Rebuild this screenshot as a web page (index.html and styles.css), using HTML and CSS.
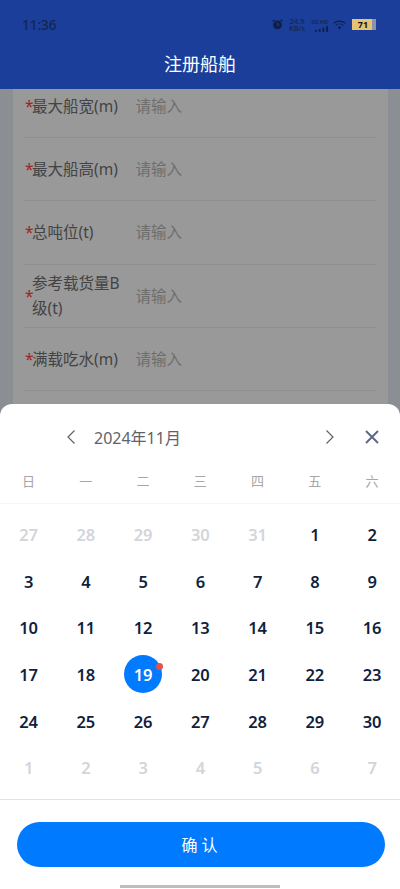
FILE: index.html
```html
<!DOCTYPE html>
<html lang="zh-CN">
<head>
<meta charset="utf-8">
<title>注册船舶</title>
<link rel="stylesheet" href="styles.css">
</head>
<body>
<div class="page">
  <header class="header">
    <div class="status">
      <span class="time">11:36</span>
      <div class="status-icons">
        <svg class="alarm" viewBox="0 0 12 12" width="11" height="11"><circle cx="6" cy="6.500" r="4.800" fill="#0f1f4a"/><path d="M6 3.800v3h2" stroke="#1a3e9a" stroke-width="1" fill="none"/><path d="M.6 2.600 2.600.8M11.400 2.600 9.400.8" stroke="#0f1f4a" stroke-width="1.400"/></svg>
        <span class="speed"><span>24.9</span><span>KB/s</span></span>
        <span class="net">
          <span class="net-label">5G HD</span>
          <svg viewBox="0 0 14 6" width="13" height="6"><g fill="#0f1f4a"><rect x="0" y="4" width="2" height="2"/><rect x="4" y="3" width="2" height="3"/><rect x="8" y="1.500" width="2" height="4.500"/><rect x="12" y="0" width="2" height="6"/></g></svg>
        </span>
        <svg class="wifi" viewBox="0 0 14 10" width="13" height="10"><g fill="none" stroke="#0f1f4a" stroke-width="1.300"><path d="M.7 3.200C4.300-.100 9.700-.100 13.300 3.200"/><path d="M2.900 5.400C5.200 3.400 8.800 3.400 11.100 5.400"/></g><path d="M5 7.400C6.200 6.500 7.800 6.500 9 7.400L7 9.800Z" fill="#0f1f4a"/></svg>
        <span class="battery"><span class="battery-level">71</span></span>
      </div>
    </div>
    <h1 class="title">注册船舶</h1>
  </header>
  <main class="content">
    <div class="card">
      <div class="row row-clipped"><span class="star">*</span><span class="label">最大船宽(m)</span><span class="hint">请输入</span></div>
      <div class="row"><span class="star">*</span><span class="label">最大船高(m)</span><span class="hint">请输入</span></div>
      <div class="row"><span class="star">*</span><span class="label">总吨位(t)</span><span class="hint">请输入</span></div>
      <div class="row"><span class="star">*</span><span class="label">参考载货量B级(t)</span><span class="hint">请输入</span></div>
      <div class="row"><span class="star">*</span><span class="label">满载吃水(m)</span><span class="hint">请输入</span></div>
    </div>
  </main>
  <div class="mask"></div>
  <section class="sheet">
    <div class="month-bar">
      <svg class="prev" viewBox="0 0 10 16" width="10" height="16"><path d="M8.500 1.500 2 8l6.500 6.500" fill="none" stroke="#5f6368" stroke-width="1.200"/></svg>
      <span class="month">2024年11月</span>
      <svg class="next" viewBox="0 0 10 16" width="10" height="16"><path d="M1.500 1.500 8 8l-6.500 6.500" fill="none" stroke="#5f6368" stroke-width="1.200"/></svg>
      <svg class="close" viewBox="0 0 14 14" width="14" height="14"><path d="M1 1l12 12M13 1 1 13" fill="none" stroke="#5e6a85" stroke-width="2"/></svg>
    </div>
    <div class="weekdays"><span>日</span><span>一</span><span>二</span><span>三</span><span>四</span><span>五</span><span>六</span></div>
    <div class="days">
      <span class="day off">27</span><span class="day off">28</span><span class="day off">29</span><span class="day off">30</span><span class="day off">31</span><span class="day">1</span><span class="day">2</span>
      <span class="day">3</span><span class="day">4</span><span class="day">5</span><span class="day">6</span><span class="day">7</span><span class="day">8</span><span class="day">9</span>
      <span class="day">10</span><span class="day">11</span><span class="day">12</span><span class="day">13</span><span class="day">14</span><span class="day">15</span><span class="day">16</span>
      <span class="day">17</span><span class="day">18</span><span class="day selected"><span class="circle">19<i class="dot"></i></span></span><span class="day">20</span><span class="day">21</span><span class="day">22</span><span class="day">23</span>
      <span class="day">24</span><span class="day">25</span><span class="day">26</span><span class="day">27</span><span class="day">28</span><span class="day">29</span><span class="day">30</span>
      <span class="day off">1</span><span class="day off">2</span><span class="day off">3</span><span class="day off">4</span><span class="day off">5</span><span class="day off">6</span><span class="day off">7</span>
    </div>
    <div class="footer">
      <button class="confirm">确 认</button>
      <div class="home-bar"></div>
    </div>
  </section>
</div>
</body>
</html>
```
FILE: styles.css
```css
* { box-sizing: border-box; }
html, body { margin: 0; padding: 0; }
body {
  width: 400px;
  height: 889px;
  overflow: hidden;
  font-family: "Noto Sans", "Noto Sans CJK SC", sans-serif;
}
.page {
  position: relative;
  width: 400px;
  height: 889px;
  overflow: hidden;
  background: #e8eff5;
  display: flex;
  flex-direction: column;
}
.header {
  position: relative;
  z-index: 1;
  height: 88.500px;
  background: #1a3e9a;
  display: flex;
  flex-direction: column;
  flex-shrink: 0;
}
.status {
  height: 49px;
  padding: 0 24px 0 22px;
  display: flex;
  align-items: center;
  justify-content: space-between;
}
.time { font-size: 13.500px; color: #14264f; font-weight: 500; }
.status-icons { display: flex; align-items: center; }
.alarm { margin-right: 6px; }
.speed { width: 16px; display: flex; flex-direction: column; align-items: center; font-size: 7.500px; line-height: 7px; color: #14264f; white-space: nowrap; margin-right: 5px; font-weight: 500; }
.net { width: 18px; display: flex; flex-direction: column; align-items: flex-end; margin-right: 5px; }
.net-label { font-size: 5.500px; line-height: 8px; color: #14264f; font-weight: 600; white-space: nowrap; }
.wifi { margin-right: 6px; }
.battery { width: 24px; height: 11px; background: linear-gradient(90deg, #e6c274 0 84%, #8c93a8 84%); display: flex; align-items: center; justify-content: center; padding-right: 2px; }
.battery-level { font-size: 9px; font-weight: 700; color: #111; line-height: 11px; }
.title {
  margin: 0;
  font-size: 18px;
  font-weight: 400;
  line-height: 30px;
  color: #fff;
  text-align: center;
}
.content { flex: 1; padding: 0 12px 0 13px; }
.card { background: #fff; padding: 0 11px; height: 100%; }
.row {
  height: 63.250px;
  padding-top: 1px;
  display: flex;
  align-items: center;
  border-bottom: 1px solid #eee;
  font-size: 15.500px;
  line-height: 25px;
}
.row-clipped { height: 49.500px; align-items: flex-start; padding-top: 5px; }
.star { color: #ff4040; width: 7px; flex-shrink: 0; margin-left: 1px; }
.label { width: 100px; margin-right: 4px; flex-shrink: 0; color: #707070; }
.hint { color: #b8b8b8; margin-left: -.5px; }
.mask { position: absolute; inset: 88px 0 0; background: rgba(0, 0, 0, .4); }
.sheet {
  position: absolute;
  z-index: 2;
  left: 0;
  right: 0;
  top: 404px;
  bottom: 0;
  background: #fff;
  border-radius: 12px 12px 0 0;
  display: flex;
  flex-direction: column;
}
.month-bar {
  height: 66px;
  display: flex;
  align-items: center;
}
.prev { margin-left: 66px; }
.month { margin-left: 18px; font-size: 16px; color: #5f6368; flex: 1; }
.next { margin-right: 30px; }
.close { margin-right: 21px; }
.weekdays {
  display: grid;
  grid-template-columns: repeat(7, 57.250px);
  height: 34px;
  font-size: 13px;
  color: #a6a6a6;
  text-align: center;
  line-height: 22px;
}
.days {
  display: grid;
  grid-template-columns: repeat(7, 57.250px);
  grid-auto-rows: 46.700px;
  height: 297px;
  padding-top: 7px;
  border-top: 1px solid #f4f4f4;
  border-bottom: 1px solid #e2e2e2;
  margin-top: -1px;
}
.day {
  display: flex;
  align-items: center;
  justify-content: center;
  font-size: 16.500px;
  font-weight: 600;
  color: #0f1f3d;
}
.day.off { color: #d2d5d9; font-weight: 600; }
.circle {
  position: relative;
  width: 38px;
  height: 38px;
  border-radius: 50%;
  background: #007aff;
  color: #fff;
  display: flex;
  align-items: center;
  justify-content: center;
}
.dot {
  position: absolute;
  top: 7.500px;
  right: -.5px;
  width: 7px;
  height: 7px;
  border-radius: 50%;
  background: #e8504a;
}
.footer { flex: 1; position: relative; display: flex; flex-direction: column; align-items: center; padding: 22px 0 0 2px; }
.confirm {
  width: 368px;
  height: 45px;
  padding: 0 3px 2px 0;
  border: 0;
  border-radius: 23px;
  background: #007aff;
  color: #fff;
  font-family: inherit;
  font-size: 16px;
}
.home-bar { position: absolute; bottom: 1px; left: 120px; width: 160px; height: 3px; background: #bdbdbd; }
```
